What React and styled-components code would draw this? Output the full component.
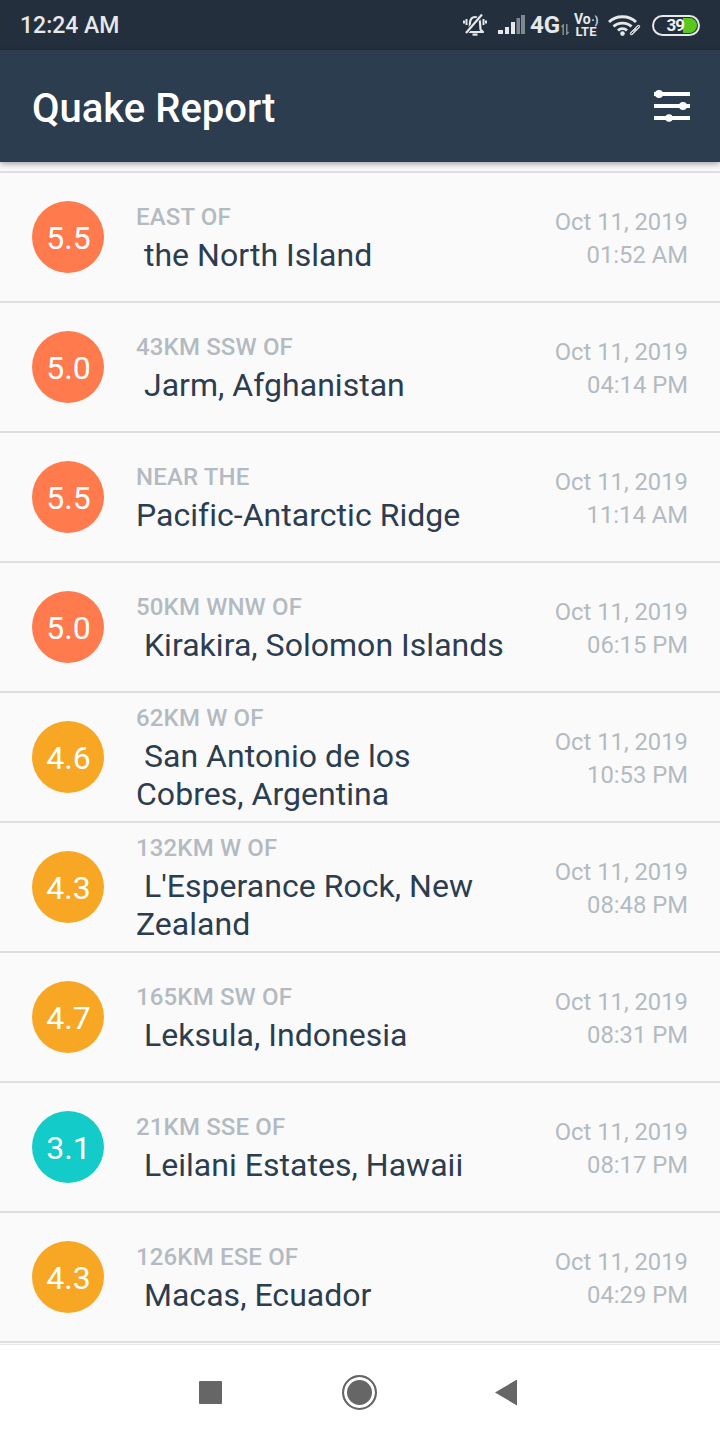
import React from 'react';
import styled, { createGlobalStyle } from 'styled-components';

const quakes = [
  { mag: '5.5', level: 'high', offset: 'EAST OF', place: ' the North Island', date: 'Oct 11, 2019', time: '01:52 AM' },
  { mag: '5.0', level: 'high', offset: '43KM SSW OF', place: ' Jarm, Afghanistan', date: 'Oct 11, 2019', time: '04:14 PM' },
  { mag: '5.5', level: 'high', offset: 'NEAR THE', place: 'Pacific-Antarctic Ridge', date: 'Oct 11, 2019', time: '11:14 AM' },
  { mag: '5.0', level: 'high', offset: '50KM WNW OF', place: ' Kirakira, Solomon Islands', date: 'Oct 11, 2019', time: '06:15 PM' },
  { mag: '4.6', level: 'mid', offset: '62KM W OF', place: ' San Antonio de los Cobres, Argentina', date: 'Oct 11, 2019', time: '10:53 PM' },
  { mag: '4.3', level: 'mid', offset: '132KM W OF', place: " L'Esperance Rock, New Zealand", date: 'Oct 11, 2019', time: '08:48 PM' },
  { mag: '4.7', level: 'mid', offset: '165KM SW OF', place: ' Leksula, Indonesia', date: 'Oct 11, 2019', time: '08:31 PM' },
  { mag: '3.1', level: 'low', offset: '21KM SSE OF', place: ' Leilani Estates, Hawaii', date: 'Oct 11, 2019', time: '08:17 PM' },
  { mag: '4.3', level: 'mid', offset: '126KM ESE OF', place: ' Macas, Ecuador', date: 'Oct 11, 2019', time: '04:29 PM' },
];

const magColors = { high: '#ff7a4d', mid: '#f7a723', low: '#13cbc9' };

function BellOff() {
  return (
    <svg width="24" height="22" viewBox="0 0 24 22" fill="none" stroke="#e6e8ea" strokeWidth="2.2">
      <path d="M6.5 15.5 L7 8.5 C7.5 5 9.5 3 12 3 C14.5 3 16.5 5 17 8.5 L17.5 15.5 L20 18 L4 18 Z" strokeLinejoin="round" />
      <path d="M9.5 20.6 H14.5" />
      <path d="M3.5 5 V11 M1 6.5 V9.5 M20.5 5 V11 M23 6.5 V9.5" strokeWidth="2" />
      <path d="M3 19 L19 0.5" stroke="#232f3c" strokeWidth="4" />
      <path d="M3 19 L19 0.5" strokeWidth="2.2" />
    </svg>
  );
}

function Signal() {
  return (
    <svg width="27" height="19" viewBox="0 0 27 19" fill="#e6e8ea">
      <rect x="0" y="15" width="5" height="4" />
      <rect x="7" y="12" width="4" height="7" />
      <rect x="13" y="7" width="4" height="12" />
      <rect x="18.5" y="3" width="3.5" height="16" fill="#7f8891" />
      <rect x="23" y="0" width="4" height="19" fill="#7f8891" />
    </svg>
  );
}

function DataArrows() {
  return (
    <svg width="8" height="11" viewBox="0 0 8 11" fill="none" stroke="#8b939b" strokeWidth="1.4">
      <path d="M2.2 11 V1 L0.4 3 M5.8 0 V10 L7.6 8" />
    </svg>
  );
}

function Wifi() {
  return (
    <svg width="33" height="21" viewBox="0 0 33 21" fill="none" stroke="#e6e8ea" strokeWidth="2.8">
      <path d="M1 7 C8 0 21 0 28 7" />
      <path d="M5.5 11.5 C10 7 19 7 23.5 11.5" />
      <path d="M10 15.5 C12.5 13 16.5 13 19 15.5" />
      <circle cx="14.5" cy="18.6" r="2.3" fill="#e6e8ea" stroke="none" />
      <path d="M23 19 L31 11.5" stroke="#232f3c" strokeWidth="6" strokeLinecap="round" />
      <path d="M23.5 18.5 L26.5 15.5" stroke="#d5d8db" strokeWidth="3.4" strokeLinecap="round" />
      <path d="M27.5 14.5 L30.5 11.5" stroke="#d5d8db" strokeWidth="3.4" strokeLinecap="round" />
      <path d="M23.5 18.5 L26.5 15.5 M27.5 14.5 L30.5 11.5" stroke="#232f3c" strokeWidth="1" strokeLinecap="round" />
      <path d="M25.5 16.5 L28.5 13.5" stroke="#d5d8db" strokeWidth="1.2" />
    </svg>
  );
}

function SettingsSliders() {
  return (
    <svg width="38" height="34" viewBox="0 0 38 34" fill="#fff">
      <rect x="1" y="3" width="36" height="4" />
      <circle cx="6" cy="5" r="4" />
      <rect x="1" y="15" width="36" height="4" />
      <circle cx="30" cy="17" r="4" />
      <rect x="1" y="27" width="36" height="4" />
      <circle cx="16" cy="29" r="3.8" />
    </svg>
  );
}

function QuakeRow({ quake }) {
  return (
    <Row>
      <Magnitude $level={quake.level}>{quake.mag}</Magnitude>
      <Place>
        <Offset>{quake.offset}</Offset>
        <PrimaryPlace>{quake.place}</PrimaryPlace>
      </Place>
      <When>
        <WhenLine>{quake.date}</WhenLine>
        <WhenLine>{quake.time}</WhenLine>
      </When>
    </Row>
  );
}

function App() {
  return (
    <Screen>
      <GlobalStyle />
      <StatusBar>
        <Clock>12:24 AM</Clock>
        <StatusIcons>
          <BellOff />
          <SignalGroup>
            <Signal />
            <NetworkType>4G</NetworkType>
            <DataArrows />
          </SignalGroup>
          <VoLte>
            <VoLine>Vo<small>·)</small></VoLine>
            <span>LTE</span>
          </VoLte>
          <Wifi />
          <Battery>
            <BatteryFill />
            <BatteryLevel>39</BatteryLevel>
          </Battery>
        </StatusIcons>
      </StatusBar>
      <AppBar>
        <Title>Quake Report</Title>
        <SettingsSliders />
      </AppBar>
      <List>
        {quakes.map((quake, i) => (
          <QuakeRow key={i} quake={quake} />
        ))}
      </List>
      <NavBar>
        <RecentButton />
        <HomeButton />
        <BackButton />
      </NavBar>
    </Screen>
  );
}

const GlobalStyle = createGlobalStyle`
  html, body {
    margin: 0;
    padding: 0;
    background: #fff;
  }
  * {
    box-sizing: border-box;
  }
`;

const Screen = styled.div`
  width: 720px;
  height: 1440px;
  display: flex;
  flex-direction: column;
  overflow: hidden;
  font-family: Roboto, "Noto Sans", sans-serif;
  background: #fafafa;
`;

const StatusBar = styled.div`
  height: 50px;
  flex: none;
  display: flex;
  align-items: center;
  justify-content: space-between;
  padding: 0 20px;
  background: #232f3c;
`;

const Clock = styled.span`
  padding-top: 1px;
  font-size: 23px;
  font-weight: 500;
  color: #e6e8ea;
`;

const StatusIcons = styled.div`
  display: flex;
  align-items: center;
  gap: 11px;
`;

const SignalGroup = styled.div`
  display: flex;
  align-items: center;
  gap: 5px;
  margin-top: -1px;

  svg:last-child {
    margin-left: -2px;
    margin-top: 9px;
  }
`;

const NetworkType = styled.span`
  width: 28px;
  font-size: 24px;
  line-height: 24px;
  font-weight: 700;
  color: #e6e8ea;
`;

const VoLte = styled.div`
  width: 22px;
  margin-left: -5px;
  display: flex;
  flex-direction: column;
  align-items: center;
  font-size: 13px;
  line-height: 11px;
  font-weight: 700;
  color: #e6e8ea;
`;

const VoLine = styled.span`
  font-size: 14px;

  small {
    font-size: 10px;
    margin-left: 1px;
  }
`;

const Battery = styled.div`
  position: relative;
  width: 48px;
  height: 21px;
  border: 2px solid #e6e8ea;
  border-radius: 11px;
  overflow: hidden;
`;

const BatteryFill = styled.div`
  position: absolute;
  top: 1px;
  right: 1px;
  bottom: 1px;
  width: 14px;
  border-radius: 0 8px 8px 0;
  background: #58c81c;
`;

const BatteryLevel = styled.span`
  position: absolute;
  inset: 0;
  display: flex;
  align-items: center;
  justify-content: flex-end;
  padding-right: 14px;
  font-size: 17px;
  font-weight: 700;
  letter-spacing: -1px;
  color: #eef0f1;
`;

const AppBar = styled.header`
  position: relative;
  height: 112px;
  flex: none;
  display: flex;
  align-items: center;
  justify-content: space-between;
  padding: 0 29px 0 32px;
  background: #2c3d4f;
  box-shadow: 0 2px 6px rgba(0, 0, 0, 0.35);
`;

const Title = styled.h1`
  margin: 0;
  padding-top: 4px;
  font-size: 40px;
  font-weight: 500;
  color: #fff;
`;

const List = styled.main`
  flex: 1;
  min-height: 0;
  padding-top: 9px;
  overflow: hidden;
  background: #fafafa;

  & > div:first-child {
    height: 132px;
    border-top: 2px solid #dedede;
  }
`;

const Row = styled.div`
  height: 130px;
  display: flex;
  align-items: center;
  padding: 0 32px;
  border-bottom: 2px solid #dedede;
`;

const Magnitude = styled.div`
  flex: none;
  width: 72px;
  height: 72px;
  padding: 1px 0 0 1px;
  display: flex;
  align-items: center;
  justify-content: center;
  border-radius: 50%;
  font-size: 32px;
  color: #fff;
  background: ${props => magColors[props.$level]};
`;

const Place = styled.div`
  flex: 1;
  min-width: 0;
  margin-left: 32px;
`;

const Offset = styled.div`
  margin-top: -1px;
  padding-bottom: 1px;
  font-size: 24px;
  line-height: 38px;
  font-weight: 500;
  letter-spacing: 0.15px;
  color: #b4bac1;
`;

const PrimaryPlace = styled.div`
  margin-top: -1px;
  padding-bottom: 1px;
  font-size: 32px;
  line-height: 38px;
  letter-spacing: 0.03px;
  color: #2c3d4f;
  white-space: pre-wrap;
`;

const When = styled.div`
  flex: none;
  width: 170px;
  padding-top: 4px;
  text-align: right;
  color: #b4bac1;
  font-size: 23.8px;
`;

const WhenLine = styled.div`
  line-height: 33px;
`;

const NavBar = styled.nav`
  height: 96px;
  flex: none;
  display: flex;
  align-items: center;
  justify-content: center;
  padding-right: 4px;
  border-top: 1px solid #e8e8e8;
  background: #fff;
`;

const RecentButton = styled.div`
  width: 23px;
  height: 23px;
  border-radius: 1px;
  background: #666;
`;

const HomeButton = styled.div`
  width: 35px;
  height: 35px;
  margin: 0 118px 0 120px;
  border-radius: 50%;
  background: #666;
  border: 2px solid #666;
  box-shadow: inset 0 0 0 3px #fff;
`;

const BackButton = styled.div`
  width: 22px;
  height: 26px;
  background: #666;
  clip-path: polygon(100% 0, 100% 100%, 0 50%);
`;

export default App;
